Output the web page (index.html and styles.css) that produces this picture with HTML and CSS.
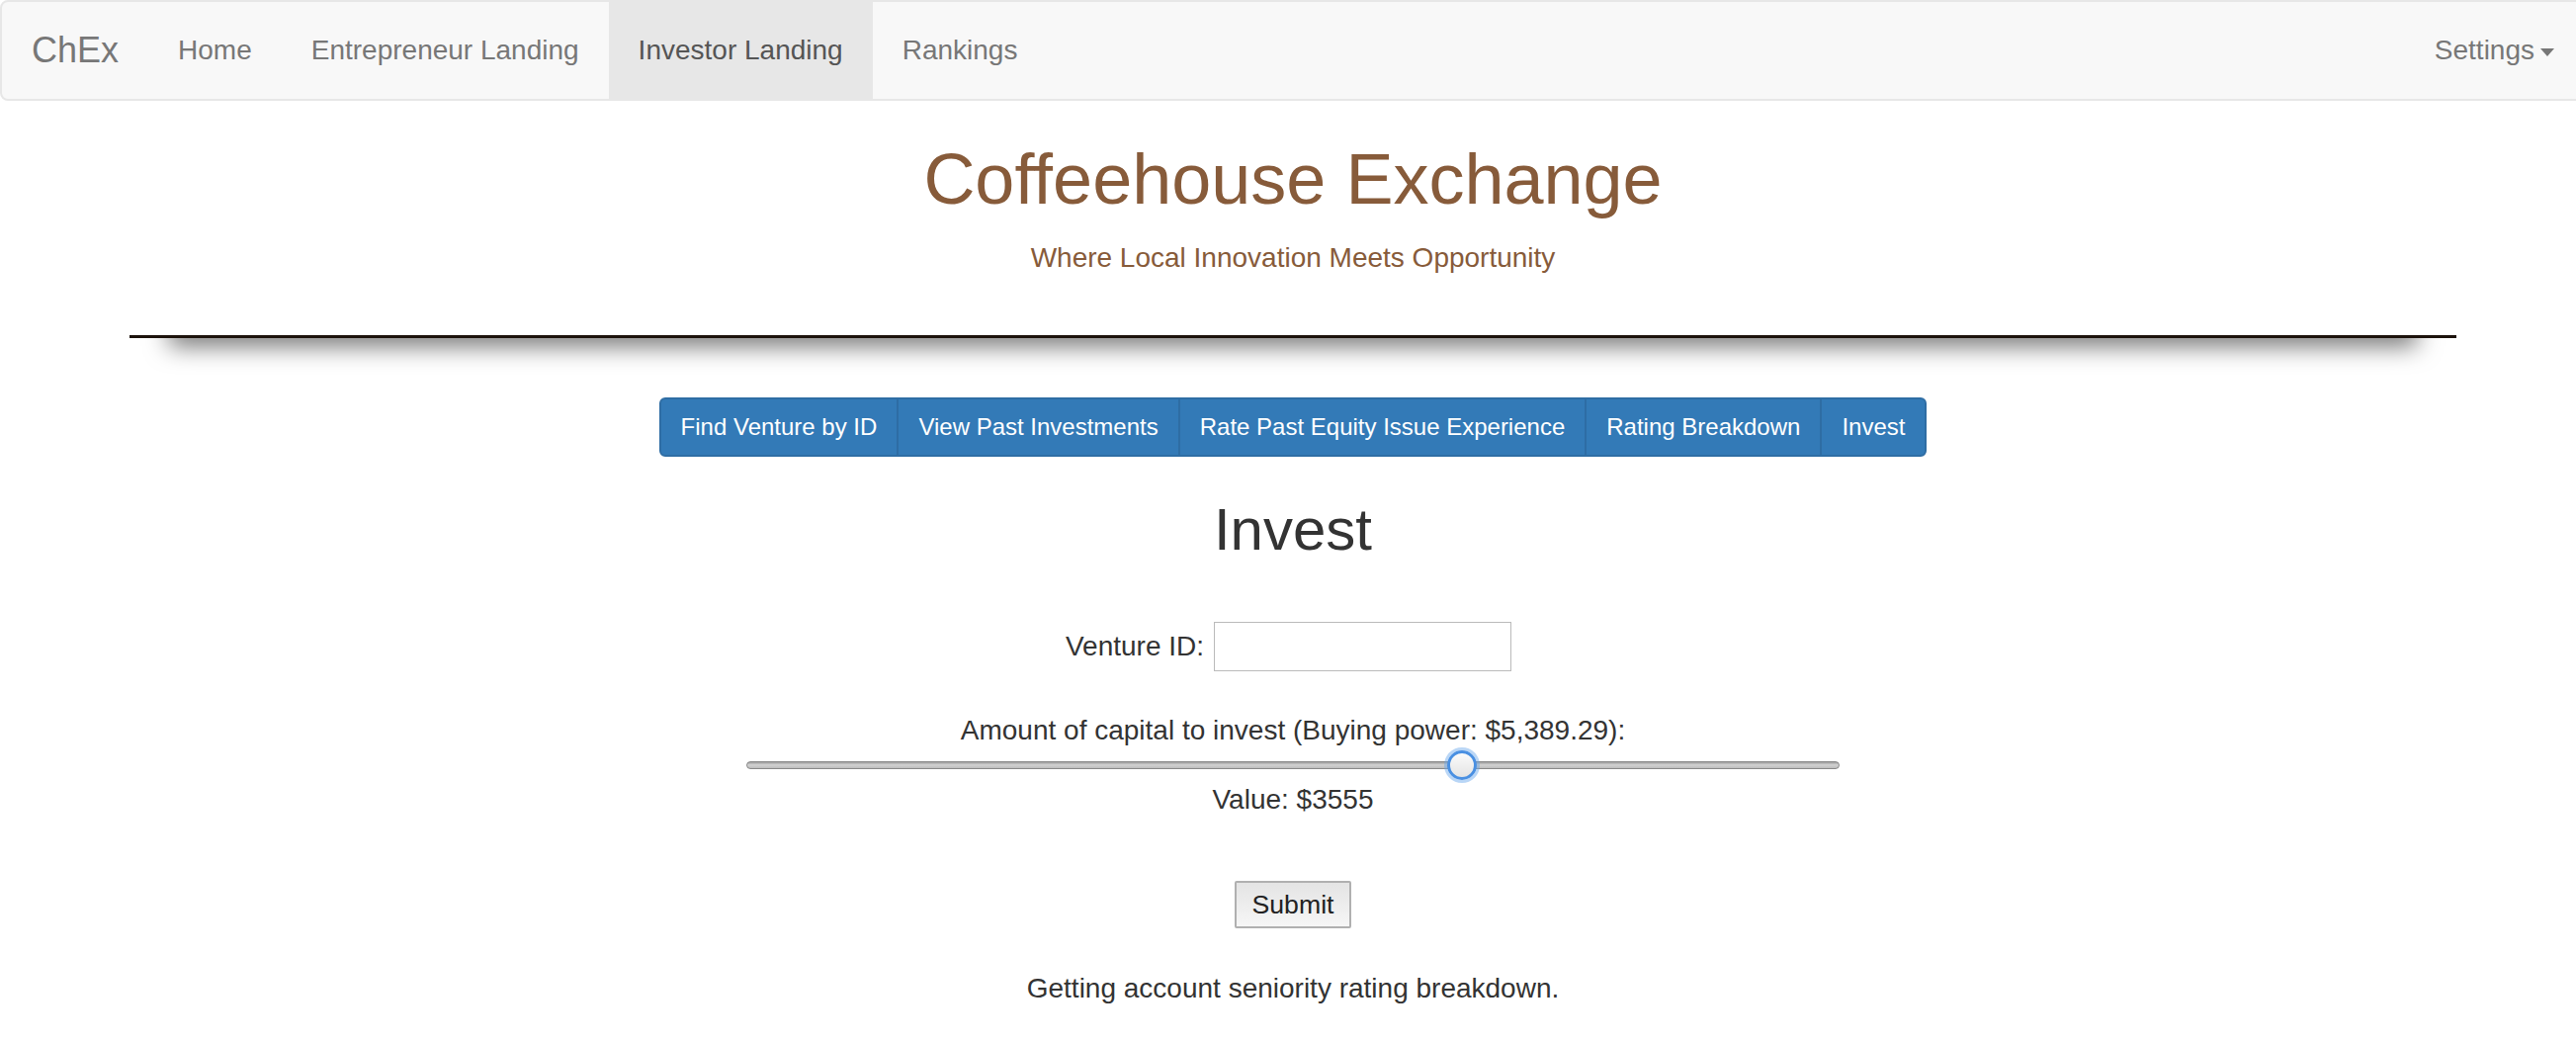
FILE: index.html
```html
<!DOCTYPE html>
<html lang="en">
<head>
  <meta charset="UTF-8">
  <title>ChEx - Invest</title>
  <meta name="viewport" content="width=device-width, initial-scale=1.0">
  <link rel="stylesheet" href="styles.css">
</head>
<body>

  <div class="page">
    <nav class="navbar">
      <a class="brand" href="#">ChEx</a>
      <ul class="nav">
        <li><a href="#">Home</a></li>
        <li><a href="#">Entrepreneur Landing</a></li>
        <li class="active"><a href="#">Investor Landing</a></li>
        <li><a href="#">Rankings</a></li>
      </ul>
      <ul class="nav nav-right">
        <li><a href="#">Settings<span class="caret"></span></a></li>
      </ul>
    </nav>

    <header class="masthead">
      <h1>Coffeehouse Exchange</h1>
      <p>Where Local Innovation Meets Opportunity</p>
    </header>

    <div class="divider"><div class="divider-shade"></div></div>

    <div class="btn-group">
      <button class="btn">Find Venture by ID</button>
      <button class="btn">View Past Investments</button>
      <button class="btn">Rate Past Equity Issue Experience</button>
      <button class="btn">Rating Breakdown</button>
      <button class="btn">Invest</button>
    </div>

    <section class="invest">
      <h2>Invest</h2>

      <form onsubmit="return false;">
        <div class="field-row">
          <label for="ventureId">Venture ID:</label>
          <input type="text" id="ventureId" class="venture-input">
        </div>

        <label class="amount-label" for="amount">Amount of capital to invest (Buying power: $5,389.29):</label>
        <input type="range" id="amount" class="amount" min="0" max="5389" value="3555">
        <div class="value">Value: $<span id="amountValue">3555</span></div>

        <button type="submit" class="submit">Submit</button>
      </form>

      <p class="status">Getting account seniority rating breakdown.</p>
    </section>
  </div>

  <script>
    const slider = document.getElementById('amount');
    slider.addEventListener('input', function () {
      document.getElementById('amountValue').textContent = slider.value;
    });
  </script>

</body>
</html>
```

FILE: styles.css
```css
body {
  margin: 0;
  overflow: hidden;
  background: #fff;
  color: #333;
  font-family: "Liberation Sans", Arial, sans-serif;
  font-size: 28px;
  line-height: 40px;
}

.page {
  width: 2616px;
}

/* top navbar */
.navbar {
  display: flex;
  height: 102px;
  box-sizing: border-box;
  background: #f8f8f8;
  border: 2px solid #e7e7e7;
  border-radius: 8px;
}

.brand {
  padding: 0 30px;
  font-size: 36px;
  line-height: 98px;
  color: #777;
  text-decoration: none;
}

.nav {
  display: flex;
  margin: 0;
  padding: 0;
  list-style: none;
}

.nav a {
  display: block;
  padding: 0 30px;
  font-size: 28px;
  line-height: 98px;
  color: #777;
  text-decoration: none;
}

.nav .active a {
  background: #e7e7e7;
  color: #555;
}

.nav-right {
  margin-left: auto;
}

.caret {
  display: inline-block;
  width: 0;
  height: 0;
  margin-left: 6px;
  vertical-align: middle;
  border-top: 8px solid #777;
  border-left: 7px solid transparent;
  border-right: 7px solid transparent;
}

/* title block */
.masthead {
  text-align: center;
  color: #875b3a;
}

.masthead h1 {
  margin: 40px 0 20px;
  font-size: 72px;
  line-height: 79px;
  font-weight: normal;
}

.masthead p {
  margin: 0;
  font-size: 28px;
  line-height: 40px;
}

.divider {
  width: 90%;
  height: 40px;
  margin: 58px auto 0;
  border-top: 3px solid #1d130c;
  overflow: hidden;
}

.divider-shade {
  height: 30px;
  margin: -30px 40px 0;
  box-shadow: 0 8px 24px rgba(0, 0, 0, 0.55);
}

/* tab buttons */
.btn-group {
  display: flex;
  justify-content: center;
  margin-top: 20px;
}

.btn {
  padding: 10px 20px;
  margin: 0 0 0 -2px;
  font-family: inherit;
  font-size: 24px;
  line-height: 36px;
  color: #fff;
  background: #337ab7;
  border: 2px solid #2e6da4;
  border-radius: 0;
  cursor: pointer;
}

.btn:first-child {
  margin-left: 0;
  border-radius: 6px 0 0 6px;
}

.btn:last-child {
  border-radius: 0 6px 6px 0;
}

/* invest form */
.invest {
  text-align: center;
}

.invest h2 {
  margin: 41px 0 0;
  font-size: 60px;
  line-height: 66px;
  font-weight: normal;
}

.field-row {
  display: flex;
  justify-content: center;
  align-items: center;
  gap: 10px;
  margin-top: 60px;
}

.venture-input {
  width: 301px;
  height: 50px;
  box-sizing: border-box;
  margin: 0 9px 0 0;
  border: 1px solid #bbb;
  font-size: 28px;
}

.amount-label {
  display: block;
  margin-top: 40px;
}

.amount {
  -webkit-appearance: none;
  appearance: none;
  display: block;
  width: 1106px;
  height: 30px;
  margin: 0 auto;
  background: transparent;
}

.amount::-webkit-slider-runnable-track {
  height: 8px;
  border: 1px solid #8a8a8a;
  border-radius: 5px;
  background: linear-gradient(#9c9c9c, #d2d2d2 45%, #bcbcbc);
}

.amount::-webkit-slider-thumb {
  -webkit-appearance: none;
  width: 30px;
  height: 30px;
  margin-top: -12px;
  box-sizing: border-box;
  border: 3px solid #4a90e2;
  border-radius: 50%;
  background: linear-gradient(#fbfbfb, #e4e4e4);
  box-shadow: 0 0 0 3px rgba(100, 165, 235, 0.45);
}

.value {
  line-height: 40px;
}

.submit {
  display: block;
  height: 48px;
  margin: 62px auto 0;
  padding: 0 16px;
  font-family: inherit;
  font-size: 26.67px;
  color: #222;
  background: linear-gradient(#e4e4e4, #f6f6f6);
  border: 2px solid #b0b0b0;
  border-radius: 2px;
}

.status {
  margin: 41px 0 0;
}
```
